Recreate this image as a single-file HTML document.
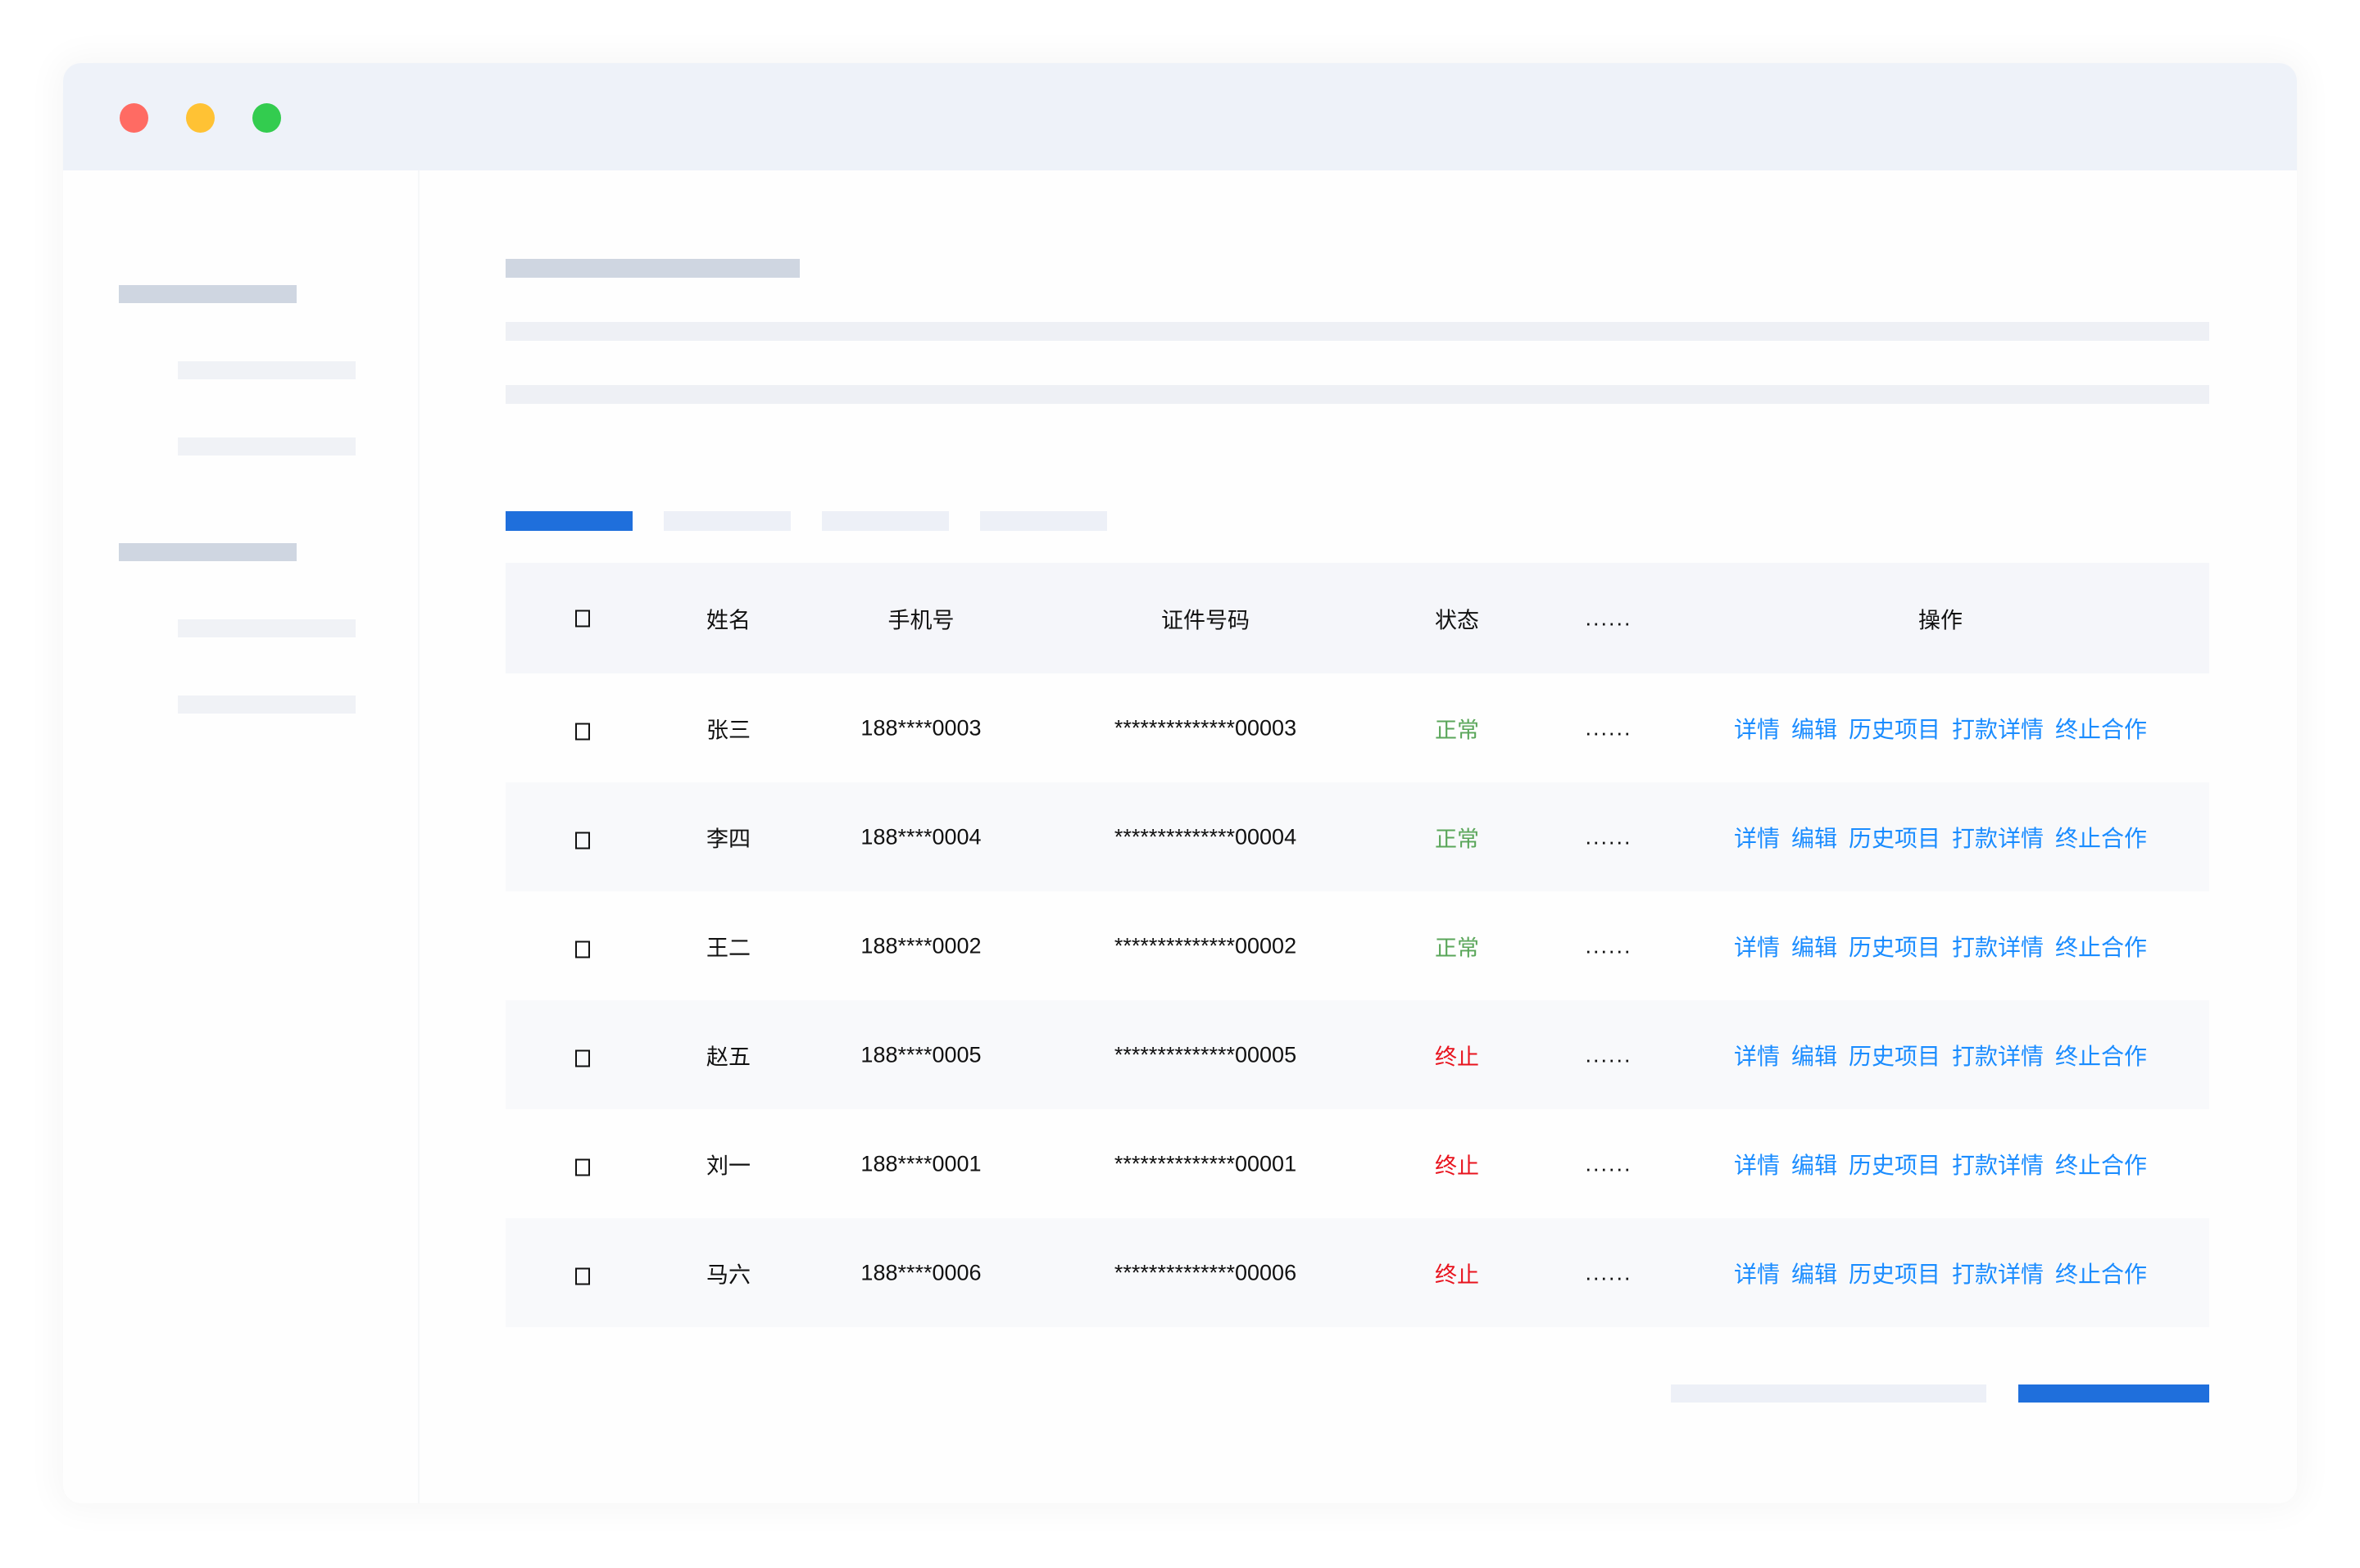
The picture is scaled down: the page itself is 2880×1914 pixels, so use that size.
<!DOCTYPE html>
<html><head><meta charset="utf-8"><style>
*{margin:0;padding:0;box-sizing:border-box}
body{width:2880px;height:1914px;background:#fff;position:relative;overflow:hidden;font-family:"Liberation Sans","Noto Sans CJK SC",sans-serif}
.win{position:absolute;left:77px;top:77px;width:2726px;height:1758px;border-radius:22px;background:#fefefe;box-shadow:0 0 40px 10px rgba(0,0,0,0.035);overflow:hidden}
.tb{position:absolute;left:0;top:0;width:100%;height:131px;background:#eef2f9}
.dot{position:absolute;top:49px;width:35px;height:36px;border-radius:50%}
.side{position:absolute;left:433px;top:131px;width:2px;height:1700px;background:#f6f7f8}
.b{position:absolute}
.row{position:absolute;left:0;width:2079px;height:133px;font-size:27px;color:#111}
.row span{position:absolute;top:50%;transform:translate(-50%,-50%);white-space:nowrap}
.d{letter-spacing:2px}
.cb{width:18px;height:21px;border:2px solid #111}
.g{color:#5aa65a}.r{color:#e8141e}
.lk{color:#1a8cff;font-size:28px}
.lk i{font-style:normal;margin:0 7px}
</style></head><body>
<div class="win">
<div class="tb"></div>
<div class="dot" style="left:69px;background:#ff6b63"></div>
<div class="dot" style="left:150px;background:#ffc234"></div>
<div class="dot" style="left:231px;background:#33cc4f"></div>
<div class="side"></div>
<div class="b" style="left:68px;top:271px;width:217px;height:22px;background:#cfd6e1"></div>
<div class="b" style="left:140px;top:364px;width:217px;height:22px;background:#f0f2f6"></div>
<div class="b" style="left:140px;top:457px;width:217px;height:22px;background:#f0f2f6"></div>
<div class="b" style="left:68px;top:586px;width:217px;height:22px;background:#cfd6e1"></div>
<div class="b" style="left:140px;top:679px;width:217px;height:22px;background:#f0f2f6"></div>
<div class="b" style="left:140px;top:772px;width:217px;height:22px;background:#f0f2f6"></div>
<div class="b" style="left:540px;top:239px;width:359px;height:23px;background:#cfd6e1"></div>
<div class="b" style="left:540px;top:316px;width:2079px;height:23px;background:#eef0f5"></div>
<div class="b" style="left:540px;top:393px;width:2079px;height:23px;background:#eef0f5"></div>
<div class="b" style="left:540px;top:547px;width:155px;height:24px;background:#1f6fdc"></div>
<div class="b" style="left:733px;top:547px;width:155px;height:24px;background:#edf0f7"></div>
<div class="b" style="left:926px;top:547px;width:155px;height:24px;background:#edf0f7"></div>
<div class="b" style="left:1119px;top:547px;width:155px;height:24px;background:#edf0f7"></div>
<div class="b" style="left:1962px;top:1613px;width:385px;height:22px;background:#edf0f7"></div>
<div class="b" style="left:2386px;top:1613px;width:233px;height:22px;background:#1f6fdc"></div>
</div>
<div class="row" style="left:617px;top:687px;height:135px;background:#f5f6fa">
<span class="cb" style="left:94px"></span><span style="left:272px">姓名</span><span style="left:507px">手机号</span><span style="left:854px">证件号码</span><span style="left:1161px">状态</span><span class="d" style="left:1346px">......</span><span style="left:1751px">操作</span></div>
<div class="row" style="left:617px;top:822px"><span class="cb" style="left:94px;margin-top:4px"></span><span style="left:272px">张三</span><span style="left:507px">188****0003</span><span style="left:854px">**************00003</span><span class="g" style="left:1161px">正常</span><span class="d" style="left:1346px">......</span><span class="lk" style="left:1751px">详情<i></i>编辑<i></i>历史项目<i></i>打款详情<i></i>终止合作</span></div>
<div class="row" style="left:617px;top:955px;background:#f8f9fb"><span class="cb" style="left:94px;margin-top:4px"></span><span style="left:272px">李四</span><span style="left:507px">188****0004</span><span style="left:854px">**************00004</span><span class="g" style="left:1161px">正常</span><span class="d" style="left:1346px">......</span><span class="lk" style="left:1751px">详情<i></i>编辑<i></i>历史项目<i></i>打款详情<i></i>终止合作</span></div>
<div class="row" style="left:617px;top:1088px"><span class="cb" style="left:94px;margin-top:4px"></span><span style="left:272px">王二</span><span style="left:507px">188****0002</span><span style="left:854px">**************00002</span><span class="g" style="left:1161px">正常</span><span class="d" style="left:1346px">......</span><span class="lk" style="left:1751px">详情<i></i>编辑<i></i>历史项目<i></i>打款详情<i></i>终止合作</span></div>
<div class="row" style="left:617px;top:1221px;background:#f8f9fb"><span class="cb" style="left:94px;margin-top:4px"></span><span style="left:272px">赵五</span><span style="left:507px">188****0005</span><span style="left:854px">**************00005</span><span class="r" style="left:1161px">终止</span><span class="d" style="left:1346px">......</span><span class="lk" style="left:1751px">详情<i></i>编辑<i></i>历史项目<i></i>打款详情<i></i>终止合作</span></div>
<div class="row" style="left:617px;top:1354px"><span class="cb" style="left:94px;margin-top:4px"></span><span style="left:272px">刘一</span><span style="left:507px">188****0001</span><span style="left:854px">**************00001</span><span class="r" style="left:1161px">终止</span><span class="d" style="left:1346px">......</span><span class="lk" style="left:1751px">详情<i></i>编辑<i></i>历史项目<i></i>打款详情<i></i>终止合作</span></div>
<div class="row" style="left:617px;top:1487px;background:#f8f9fb"><span class="cb" style="left:94px;margin-top:4px"></span><span style="left:272px">马六</span><span style="left:507px">188****0006</span><span style="left:854px">**************00006</span><span class="r" style="left:1161px">终止</span><span class="d" style="left:1346px">......</span><span class="lk" style="left:1751px">详情<i></i>编辑<i></i>历史项目<i></i>打款详情<i></i>终止合作</span></div>
</body></html>
